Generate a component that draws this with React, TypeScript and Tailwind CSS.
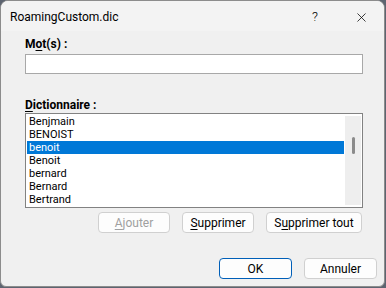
import { X } from 'lucide-react';

const words = ['Benjmain', 'BENOIST', 'benoit', 'Benoit', 'bernard', 'Bernard', 'Bertrand'];
const SELECTED = 2;

function DialogButton({
  children,
  disabled,
  primary,
  className = '',
}: {
  children: React.ReactNode;
  disabled?: boolean;
  primary?: boolean;
  className?: string;
}) {
  return (
    <button
      disabled={disabled}
      className={[
        'flex h-[21px] items-center justify-center rounded-[4px] border bg-[#fdfdfd] text-[12px] leading-none',
        primary ? 'border-[#005fb8]' : 'border-[#d0d0d0]',
        disabled ? 'text-[#a0a0a0]' : 'text-black',
        className,
      ].join(' ')}
    >
      {children}
    </button>
  );
}

export default function App() {
  return (
    <div className="h-[288px] w-[386px] bg-[#5d6470] font-['Segoe_UI',Roboto,sans-serif]">
      <div className="flex h-[287px] w-[385px] flex-col overflow-hidden rounded-t-[8px] rounded-b-[6px] border border-[#8c8c8c] bg-[#f0f0f0]">
        {/* Title bar */}
        <div className="flex h-[30px] shrink-0 items-center bg-[#f3f3f3] pt-[2px]">
          <div className="flex-1 pl-[9px] text-[12px] text-black">RoamingCustom.dic</div>
          <div className="flex h-full w-[46px] items-center justify-center text-[13px] font-light text-black">?</div>
          <div className="flex h-full w-[46px] items-center justify-center text-black">
            <X size={15} strokeWidth={1.2} />
          </div>
        </div>

        {/* Body */}
        <div className="flex flex-1 flex-col pl-[24px] pr-[21px] pt-[6px]">
          <div className="h-[14px] text-[12px] font-bold leading-[14px] text-black">
            M<span className="underline underline-offset-2">o</span>t(s) :
          </div>
          <input className="mt-[3px] h-[20px] w-full border border-[#a8a8a8] bg-white px-1 text-[12px] outline-none" />

          <div className="mt-[24px] h-[14px] text-[12px] font-bold leading-[14px] text-black">
            <span className="underline underline-offset-2">D</span>ictionnaire :
          </div>
          <div className="mt-[1px] flex h-[95px] w-full border border-[#828282] bg-white p-[1px]">
            <div className="flex flex-1 flex-col">
              {words.map((w, i) => (
                <div
                  key={w}
                  className={[
                    'h-[13px] pl-[2px] text-[11px] leading-[13px]',
                    i === SELECTED ? 'bg-[#0078d7] text-white' : 'text-black',
                  ].join(' ')}
                >
                  {w}
                </div>
              ))}
            </div>
            <div className="my-[1px] ml-[1px] flex w-[16px] justify-center bg-[#eeeeee] pt-[21px]">
              <div className="h-[17px] w-[3px] rounded-full bg-[#8b8b8b]" />
            </div>
          </div>

          <div className="mt-[4px] flex justify-end gap-[12px] pr-[1px]">
            <DialogButton disabled className="w-[72px]">
              <span className="underline underline-offset-2">A</span>jouter
            </DialogButton>
            <DialogButton className="w-[72px]">
              <span className="underline underline-offset-2">S</span>upprimer
            </DialogButton>
            <DialogButton className="w-[96px]">
              S<span className="underline underline-offset-2">u</span>pprimer tout
            </DialogButton>
          </div>

          <div className="mr-[-14px] mt-[25px] flex justify-end gap-[12px]">
            <DialogButton primary className="w-[73px]">
              OK
            </DialogButton>
            <DialogButton className="w-[73px]">Annuler</DialogButton>
          </div>
        </div>
      </div>
    </div>
  );
}
